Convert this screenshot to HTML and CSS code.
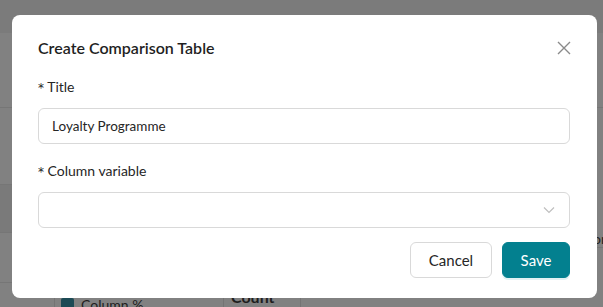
FILE: index.html
```html
<!DOCTYPE html>
<html lang="en">
<head>
<meta charset="utf-8">
<title>Create Comparison Table</title>
<link rel="stylesheet" href="styles.css">
</head>
<body>
<div class="page">
  <div class="page-head"></div>
  <div class="page-body">
    <div class="side side-left">
      <div class="band b1"></div>
      <div class="band b2"></div>
      <div class="band b3 dark"></div>
      <div class="band b4"></div>
    </div>
    <div class="page-main">
      <div class="under-row">
        <div class="under-cell cell-check"><span class="under-box"></span><span class="under-text">Column %</span></div>
        <div class="under-cell cell-count"><span class="under-bold">Count</span></div>
      </div>
    </div>
    <div class="side side-right">
      <div class="band r1"></div>
      <div class="band r2"><span class="under-peek">on</span></div>
    </div>
  </div>
</div>

<div class="modal" role="dialog" aria-labelledby="modal-title">
  <div class="modal-header">
    <h2 class="modal-title" id="modal-title">Create Comparison Table</h2>
    <button class="close-btn" aria-label="Close">
      <svg width="14" height="14" viewBox="0 0 14 14"><path d="M1 1 L13 13 M13 1 L1 13" stroke="#8a8a8a" stroke-width="1.4" fill="none"/></svg>
    </button>
  </div>
  <div class="field">
    <label class="field-label"><span class="req">*</span> Title</label>
    <div class="input">Loyalty Programme</div>
  </div>
  <div class="field">
    <label class="field-label"><span class="req">*</span> Column variable</label>
    <div class="input select">
      <span class="select-value"></span>
      <svg class="chevron" width="12" height="8" viewBox="0 0 12 8"><path d="M1 1.5 L6 6.5 L11 1.5" stroke="#bfbfbf" stroke-width="1.2" fill="none"/></svg>
    </div>
  </div>
  <div class="modal-footer">
    <button class="btn btn-default">Cancel</button>
    <button class="btn btn-primary">Save</button>
  </div>
</div>
</body>
</html>
```

FILE: styles.css
```css
* { box-sizing: border-box; }
html, body { margin: 0; padding: 0; }
body {
  width: 603px;
  height: 307px;
  overflow: hidden;
  position: relative;
  background: #818181;
  font-family: "Lato", "Liberation Sans", sans-serif;
}

/* dimmed page underneath */
.page { width: 603px; height: 307px; display: flex; flex-direction: column; }
.page-head { height: 33px; background: #7b7b7b; flex: none; }
.page-body { flex: 1; display: flex; }
.side { display: flex; flex-direction: column; flex: none; }
.side-left { width: 12px; }
.side-right { width: 6px; }
.page-main { flex: 1; display: flex; flex-direction: column; justify-content: flex-end; }
.band { border-bottom: 1px solid #767676; }
.b1 { height: 75px; }
.b2 { height: 77px; }
.b3 { height: 48px; }
.b3.dark { background: #7a7a7a; }
.b4 { height: 50px; }
.r1 { height: 75px; }
.r2 { height: 140px; position: relative; overflow: hidden; }
.under-peek {
  position: absolute; left: -4px; top: 122px;
  font-size: 14px; color: #222;
}
.under-row { display: flex; height: 13px; padding-left: 42px; }
.under-cell { border-left: 1px solid #747474; height: 13px; display: flex; align-items: flex-start; }
.cell-check { width: 169px; padding-left: 6px; gap: 7px; }
.cell-count { width: 78px; border-right: 1px solid #747474; padding-left: 7px; }
.under-box { width: 13px; height: 13px; margin-top: 4px; border-radius: 2px; background: #1c4a55; }
.under-text { font-size: 14px; color: #1e1e1e; margin-top: 2px; }
.under-bold { font-size: 16px; font-weight: 700; color: #1e1e1e; margin-top: -7px; }

/* modal */
.modal {
  position: absolute;
  left: 12px; top: 15px;
  width: 585px; height: 283px;
  background: #fff;
  border-radius: 8px;
  padding: 21px 27px 0 26px;
  display: flex; flex-direction: column;
}
.modal-header { display: flex; align-items: center; justify-content: space-between; height: 24px; }
.modal-title { margin: 0; font-size: 16px; line-height: 24px; font-weight: 600; color: #1f1f1f; }
.close-btn {
  border: 0; background: none; padding: 0; width: 14px; height: 14px;
  margin-right: -1px; display: flex; cursor: pointer;
}
.field { margin-top: 16px; display: flex; flex-direction: column; }
.field-label { font-size: 14px; line-height: 22px; color: #262626; margin-bottom: 9px; }
.req { font-family: "DejaVu Sans", sans-serif; font-size: 12px; color: #262626; }
.input {
  height: 36px; border: 1px solid #d9d9d9; border-radius: 6px;
  padding: 0 13px; display: flex; align-items: center;
  font-size: 13.5px; color: #262626;
}
.select { justify-content: space-between; padding-right: 14px; }
.modal-footer { margin-top: 14px; display: flex; justify-content: flex-end; gap: 10px; }
.btn {
  height: 36px; border-radius: 6px; font-family: inherit; font-size: 15px;
  padding: 0; cursor: pointer;
}
.btn-default { width: 82px; background: #fff; border: 1px solid #d9d9d9; color: #262626; }
.btn-primary { width: 68px; background: #03808f; border: 1px solid #03808f; color: #fff; box-shadow: 0 2px 0 rgba(5,145,160,0.12); }
```
